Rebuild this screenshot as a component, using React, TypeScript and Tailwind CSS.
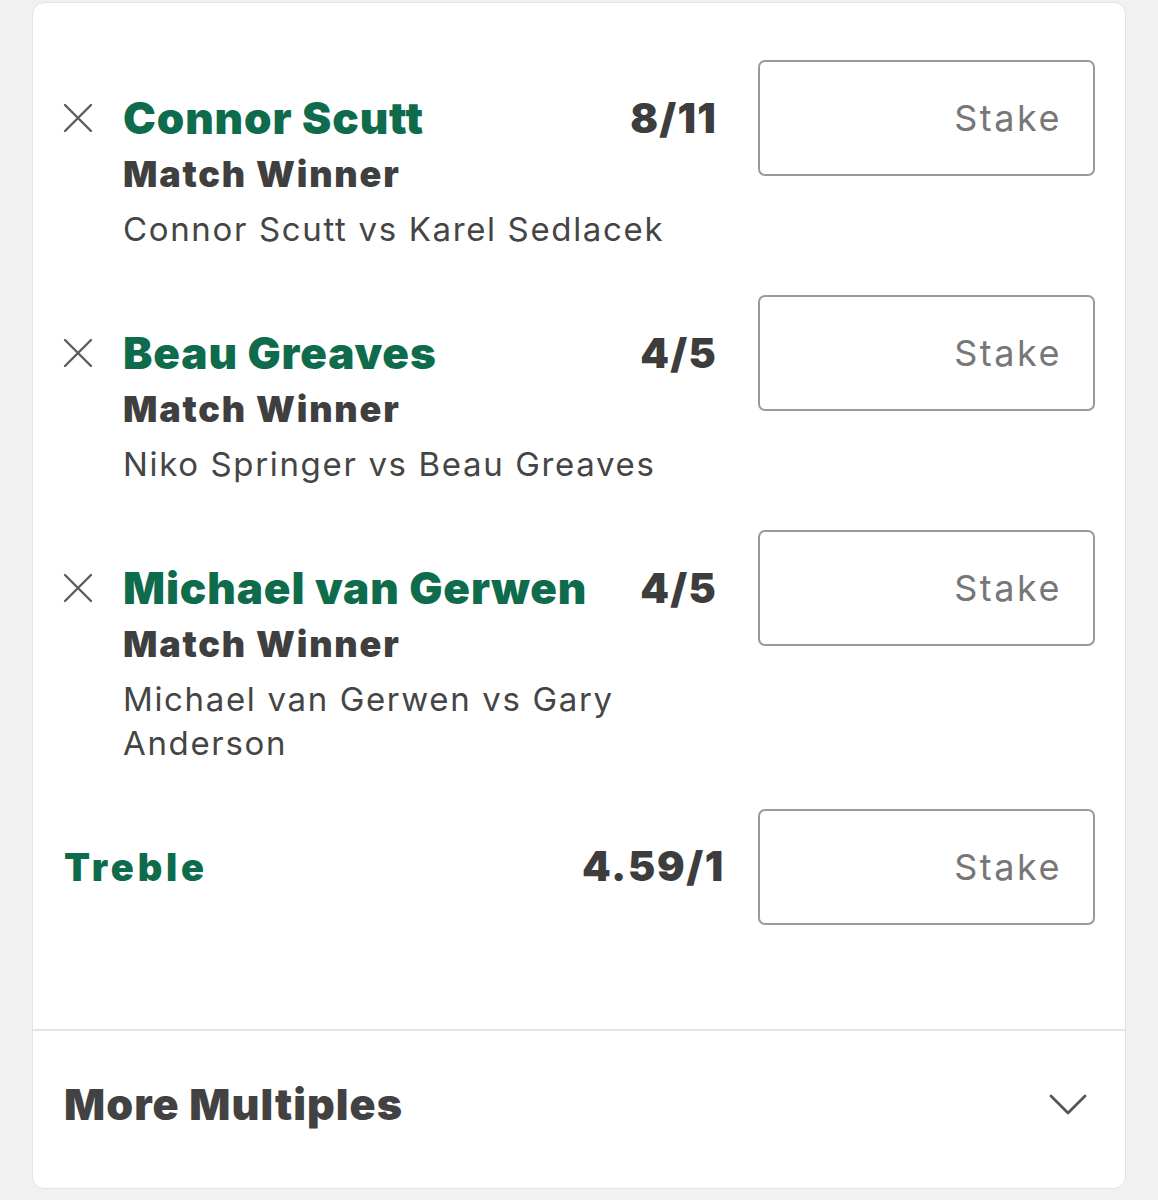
import React from 'react';

interface Selection {
  name: string;
  odds: string;
  market: string;
  event: string;
}

const SELECTIONS: Selection[] = [
  { name: 'Connor Scutt', odds: '8/11', market: 'Match Winner', event: 'Connor Scutt vs Karel Sedlacek' },
  { name: 'Beau Greaves', odds: '4/5', market: 'Match Winner', event: 'Niko Springer vs Beau Greaves' },
  { name: 'Michael van Gerwen', odds: '4/5', market: 'Match Winner', event: 'Michael van Gerwen vs Gary Anderson' },
];

const font = { fontFamily: 'Inter, "Liberation Sans", sans-serif' };

const CloseIcon = () => (
  <svg width="30" height="30" viewBox="0 0 30 30" fill="none" stroke="#5c5c5c" strokeWidth="2.4" strokeLinecap="round">
    <path d="M2 2 L28 28 M28 2 L2 28" />
  </svg>
);

const Chevron = () => (
  <svg width="38" height="24" viewBox="0 0 38 24" fill="none" stroke="#555" strokeWidth="2.8" strokeLinecap="round" strokeLinejoin="round">
    <path d="M2 3 L19 20 L36 3" />
  </svg>
);

const StakeBox = ({ className = '' }: { className?: string }) => (
  <div className={`flex h-[116px] w-[337px] shrink-0 items-center justify-end rounded-[7px] border-2 border-[#9a9a9a] pr-[31px] ${className}`}>
    <span className="text-[36px] tracking-[0.07em] text-[#777]">Stake</span>
  </div>
);

const BetRow = ({ sel }: { sel: Selection }) => (
  <div className="flex items-start">
    <div className="flex flex-1 pt-[30px]">
      <div className="w-[60px] shrink-0 pt-[13px]">
        <CloseIcon />
      </div>
      <div className="flex-1">
        <div className="flex items-center justify-between leading-[56px]">
          <span className="text-[44px] font-black tracking-[0.02em] text-[#0e6b4b]">{sel.name}</span>
          <span className="text-[41px] font-black tracking-[0.03em] text-[#3d3d3d]">{sel.odds}</span>
        </div>
        <div className="text-[36px] font-black leading-[56px] tracking-[0.05em] text-[#3f3f3f]">{sel.market}</div>
        <div className="mt-[5px] text-[33px] leading-[44px] tracking-[0.05em] text-[#454545]">{sel.event}</div>
      </div>
    </div>
    <StakeBox className="ml-[41px]" />
  </div>
);

export default function App() {
  return (
    <div className="min-h-[1200px] bg-[#f1f1f1] pt-[2px]" style={font}>
      <div className="ml-[32px] w-[1094px] rounded-[12px] border border-[#e2e2e2] bg-white">
        <div className="flex flex-col gap-[44px] pl-[30px] pr-[30px] pt-[57px]">
          {SELECTIONS.map(s => (
            <BetRow key={s.name} sel={s} />
          ))}
          <div className="flex items-center">
            <span className="flex-1 pl-[1px] text-[38px] font-black tracking-[0.1em] text-[#0e6b4b]">Treble</span>
            <span className="text-[41px] font-black tracking-[0.04em] text-[#3d3d3d]">4.59/1</span>
            <StakeBox className="ml-[33px]" />
          </div>
        </div>
        <div className="mt-[104px] border-t-2 border-[#e4e4e4]" />
        <div className="flex h-[157px] items-center justify-between pb-[10px] pl-[31px] pr-[38px]">
          <span className="text-[43px] font-black tracking-[0.025em] text-[#424242]">More Multiples</span>
          <Chevron />
        </div>
      </div>
    </div>
  );
}
